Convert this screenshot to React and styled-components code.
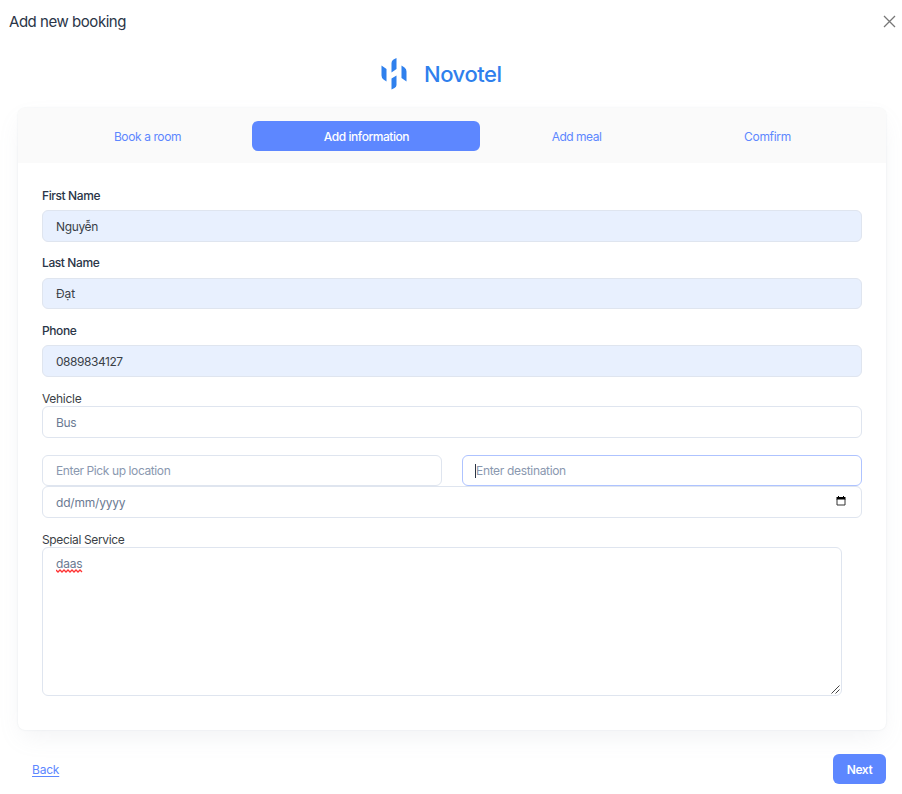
import React from "react";
import styled, { createGlobalStyle } from "styled-components";

const Global = createGlobalStyle`
  * { box-sizing: border-box; }
  body { margin: 0; background: #fff; }
  body, input, button { font-family: "Inter", "Noto Sans", sans-serif; }
`;

const Dialog = styled.main`
  width: 902px;
  height: 794px;
  overflow: hidden;
  display: flex;
  flex-direction: column;
  font-size: 12px;
  color: #2a3547;
`;
const Header = styled.header`
  height: 44px;
  flex: none;
  display: flex;
  align-items: center;
  justify-content: space-between;
  padding: 0 6px 1px 9px;
`;
const Title = styled.h1`
  margin: 0;
  padding-top: 1px;
  font-size: 15px;
  line-height: 20px;
  font-weight: 400;
  letter-spacing: -0.46px;
`;
const Close = styled.button`
  border: 0;
  padding: 0;
  background: none;
  display: flex;
`;
const Brand = styled.div`
  height: 64px;
  flex: none;
  display: flex;
  align-items: flex-start;
  padding: 13px 0 0 380px;
  gap: 15px;
  color: #2f80ed;
`;
const BrandName = styled.span`
  padding-left: 1px;
  font-size: 22px;
  line-height: 34px;
  font-weight: 500;
  letter-spacing: -0.45px;
`;
const Card = styled.section`
  width: 868px;
  height: 622px;
  flex: none;
  margin-left: 18px;
  border-radius: 7px;
  background: #fff;
  box-shadow: 0 0 2px rgba(145, 158, 171, 0.2), 0 10px 24px -4px rgba(145, 158, 171, 0.12);
`;
const Tabs = styled.nav`
  height: 55px;
  padding: 13px 24px 12px;
  display: grid;
  grid-template-columns: 210px 228px 192px 190px;
  background: #fafafa;
  border-radius: 7px 7px 0 0;
`;
const Tab = styled.button`
  border: 0;
  padding: 0 0 0 1px;
  border-radius: 6px;
  font-size: 12px;
  font-weight: ${(p) => (p.$active ? 500 : 400)};
  letter-spacing: ${(p) => p.$track}px;
  color: ${(p) => (p.$active ? "#fff" : "#5d87ff")};
  background: ${(p) => (p.$active ? "#5d87ff" : "transparent")};
`;
const Form = styled.form`
  padding: 25px 24px 0;
`;
const Field = styled.div`
  height: ${(p) => p.$height}px;
  padding-top: ${(p) => p.$top || 0}px;
  display: flex;
  flex-direction: column;
`;
const Label = styled.label`
  height: ${(p) => p.$height || 22}px;
  line-height: 16px;
  font-weight: ${(p) => (p.$plain ? 400 : 500)};
  letter-spacing: ${(p) => p.$track || 0}px;
  color: ${(p) => (p.$plain ? "#3b3f46" : "#2a3547")};
`;
const Control = styled.input`
  display: block;
  width: 100%;
  height: ${(p) => p.$height || 32}px;
  padding: 0 13px;
  border: 1px solid ${(p) => (p.$focused ? "#aec3ff" : "#dfe5ef")};
  border-radius: 6px;
  outline: 0;
  font-size: 12px;
  letter-spacing: ${(p) => p.$track || 0}px;
  color: ${(p) => (p.$filled ? "#3a3f47" : "#6b7a93")};
  background: ${(p) => (p.$filled ? "#e8f0fe" : "#fff")};
  &::placeholder { color: #8a98af; opacity: 1; }
`;
const Locations = styled.div`
  display: grid;
  grid-template-columns: 400px 400px;
  gap: 20px;
`;
const Focused = styled.div`
  position: relative;
`;
const Caret = styled.i`
  position: absolute;
  left: 13px;
  top: 9px;
  width: 1px;
  height: 14px;
  background: #2a3547;
`;
const DateControl = styled.div`
  height: 32px;
  border: 1px solid #dfe5ef;
  border-radius: 6px;
  padding: 0 15px 0 13px;
  display: flex;
  align-items: center;
  justify-content: space-between;
  color: #6b7a93;
  letter-spacing: ${(p) => p.$track}px;
  svg { margin-bottom: 2px; }
`;
const Notes = styled.div`
  position: relative;
  width: 800px;
  height: 149px;
  border: 1px solid #dfe5ef;
  border-radius: 6px;
  padding: 7px 13px;
  line-height: 18px;
  color: #6b7a93;
`;
const NoteText = styled.span`
  position: relative;
  letter-spacing: -0.2px;
`;
const Squiggle = styled.svg`
  position: absolute;
  left: 0;
  top: 13px;
`;
const Grip = styled.svg`
  position: absolute;
  right: 1px;
  bottom: 1px;
`;
const Footer = styled.footer`
  display: flex;
  align-items: center;
  justify-content: space-between;
  padding: 24px 16px 0 32px;
`;
const Back = styled.a`
  color: #5d87ff;
  text-decoration: underline;
  text-underline-offset: 2px;
  letter-spacing: -0.2px;
`;
const Next = styled.button`
  width: 53px;
  height: 30px;
  border: 0;
  border-radius: 6px;
  padding: 1px 0 0;
  font-size: 12px;
  font-weight: 600;
  letter-spacing: -0.4px;
  color: #fff;
  background: #5d87ff;
`;

const tabs = [
  { name: "Book a room", track: -0.4 },
  { name: "Add information", track: -0.45, active: true },
  { name: "Add meal", track: -0.5 },
  { name: "Comfirm", track: -0.3 },
];
const people = [
  { label: "First Name", value: "Nguyễn", height: 67, size: 32, labelHeight: 22, track: -0.35 },
  { label: "Last Name", value: "Đạt", height: 68, size: 31, labelHeight: 23, track: -0.1 },
  { label: "Phone", value: "0889834127", height: 68, size: 32, labelHeight: 22, track: -0.45 },
];

export default function App() {
  return (
    <Dialog>
      <Global />
      <Header>
        <Title>Add new booking</Title>
        <Close aria-label="Close">
          <svg width="13" height="13" viewBox="0 0 13 13" stroke="#777" strokeWidth="1.3">
            <path d="M1 1 12 12M12 1 1 12" />
          </svg>
        </Close>
      </Header>
      <Brand>
        <svg width="28" height="34" viewBox="0 0 28 34" fill="#2f80ed">
          <path d="M1.5 8.5 6.5 12V24.5L3.5 22.5Q1.5 21 1.5 18.5ZM11.5 6Q11.5 3.7 13.5 2.5L16.5 1V12L11.5 15.5ZM21.5 8.5 24.5 10.5Q26.5 12 26.5 14.5V24.5L21.5 21ZM11.5 21.5 16.5 18.5V28Q16.5 30 14.5 31L11.5 32.5Z" />
        </svg>
        <BrandName>Novotel</BrandName>
      </Brand>
      <Card>
        <Tabs>
          {tabs.map((t) => (
            <Tab key={t.name} $active={t.active} $track={t.track}>{t.name}</Tab>
          ))}
        </Tabs>
        <Form>
          {people.map((f) => (
            <Field key={f.label} $height={f.height}>
              <Label $height={f.labelHeight} $track={-0.4}>{f.label}</Label>
              <Control $filled $height={f.size} $track={f.track} defaultValue={f.value} />
            </Field>
          ))}
          <Field $height={64}>
            <Label $plain $height={15} $track={-0.3}>Vehicle</Label>
            <Control $track={-0.3} defaultValue="Bus" />
          </Field>
          <Locations>
            <Control $height={31} $track={-0.4} placeholder="Enter Pick up location" />
            <Focused>
              <Control $height={31} $focused $track={-0.33} placeholder="Enter destination" />
              <Caret />
            </Focused>
          </Locations>
          <DateControl $track={-0.2}>
            dd/mm/yyyy
            <svg width="10" height="10" viewBox="0 0 10 10" fill="none">
              <path d="M1 3V9H9V3" stroke="#333" />
              <path d="M.5 1H9.5V3.5H.5ZM2 0H3V1H2ZM7 0H8V1H7Z" fill="#000" />
            </svg>
          </DateControl>
          <Field $height={178} $top={14}>
            <Label $plain $height={15} $track={-0.35}>Special Service</Label>
            <Notes>
              <NoteText>
                daas
                <Squiggle width="27" height="4" viewBox="0 0 27 4">
                  <path d="M0 1 2 3 4 1 6 3 8 1 10 3 12 1 14 3 16 1 18 3 20 1 22 3 24 1 26 3" fill="none" stroke="#f33" strokeWidth="1.3" />
                </Squiggle>
              </NoteText>
              <Grip width="9" height="9" viewBox="0 0 9 9" stroke="#444">
                <path d="M.5 8.5 8.5.5M4.5 8.5 8.5 4.5" />
              </Grip>
            </Notes>
          </Field>
        </Form>
      </Card>
      <Footer>
        <Back href="#">Back</Back>
        <Next>Next</Next>
      </Footer>
    </Dialog>
  );
}
